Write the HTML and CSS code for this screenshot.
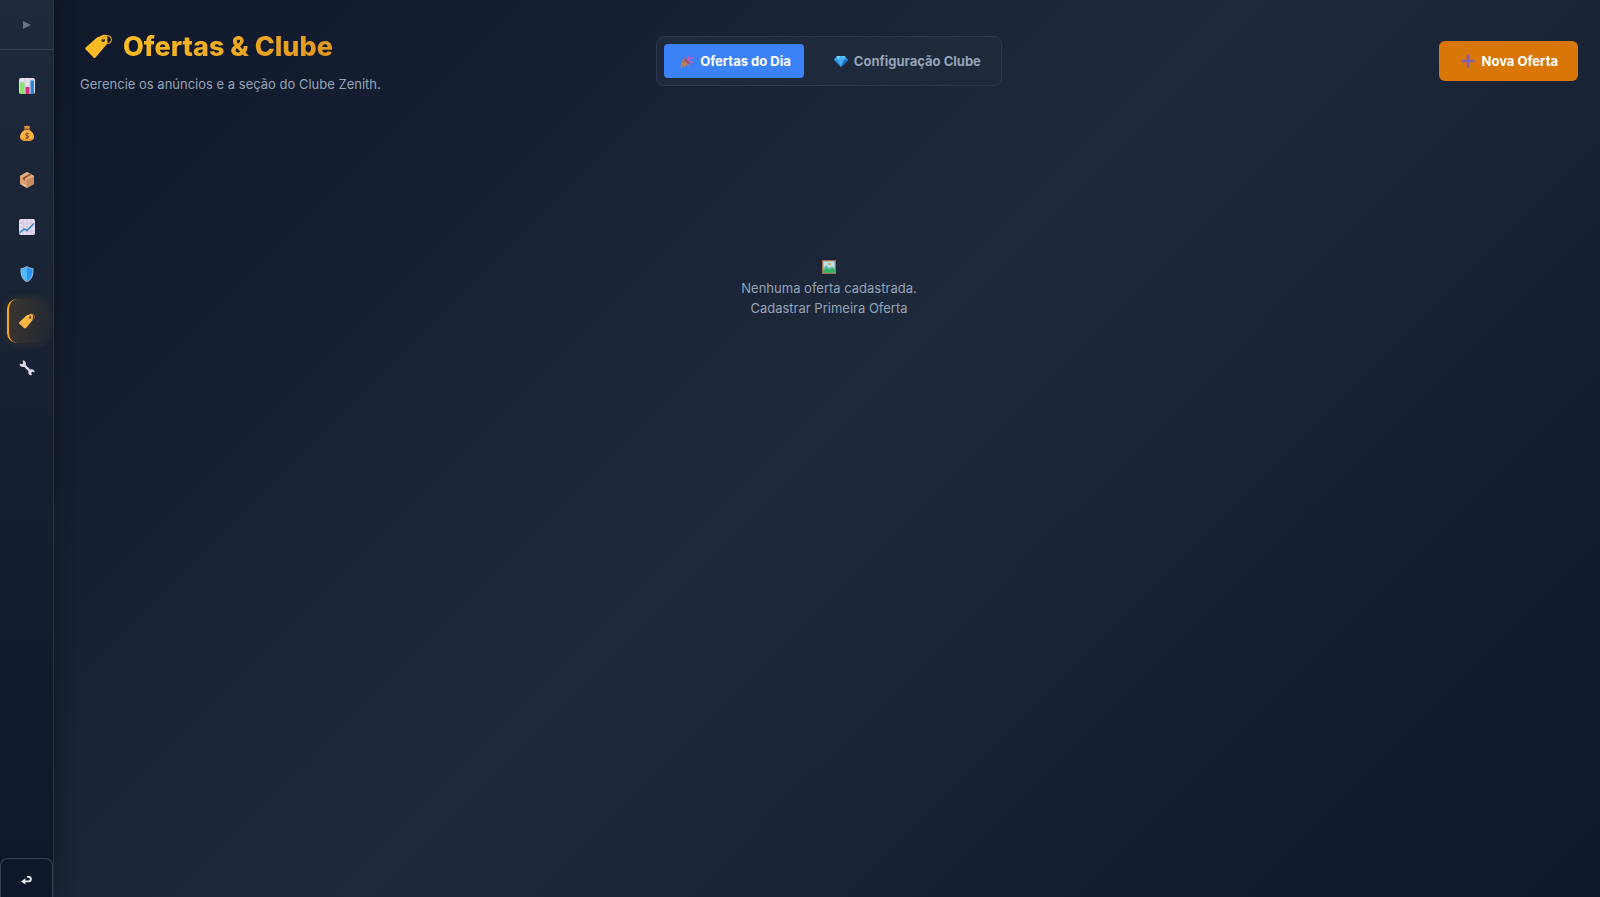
FILE: index.html
```html
<!DOCTYPE html>
<html lang="pt-BR">
<head>
    <meta charset="UTF-8">
    <meta name="viewport" content="width=device-width, initial-scale=1.0">
    <title>Ofertas &amp; Clube</title>
    <link rel="stylesheet" href="styles.css">
</head>
<body>
    <aside class="sidebar">
        <button type="button" class="sidebar-toggle" aria-label="Expandir menu">
            <svg class="icon-toggle" viewBox="0 0 8 8"><path d="M0 0L8 4L0 8Z" fill="#64748b"/></svg>
        </button>
        <nav class="sidebar-nav">
            <a href="#" class="nav-link" aria-label="Dashboard">
                <svg class="icon" viewBox="0 0 16 16">
                    <rect width="16" height="16" rx="2" fill="#e6e0ee"/>
                    <path d="M0 4H16M0 8H16M0 12H16M6 0V16M11 0V16" stroke="#c5bdd2" stroke-width=".5"/>
                    <rect x="1" y="4.500" width="4.500" height="11.500" fill="#8be070"/>
                    <rect x="6.500" y="9" width="4" height="7" fill="#d92d78"/>
                    <rect x="11.500" y="2.500" width="3.500" height="13.500" fill="#2b86d8"/>
                </svg>
            </a>
            <a href="#" class="nav-link" aria-label="Vendas">
                <svg class="icon" viewBox="0 0 16 16">
                    <path d="M5.500 5C2.500 7 1 9.500 1 11.500C1 14.500 3 16 8 16C13 16 15 14.500 15 11.500C15 9.500 13.500 7 10.500 5Z" fill="#f9b53f"/>
                    <path d="M1.200 12.500C1.700 15 4 16 8 16C12 16 14.300 15 14.800 12.500C12 14.500 5 14.800 1.200 12.500Z" fill="#e8953a"/>
                    <path d="M5 .8L7 1.300L8 .2L9.200 1.300L11 .8L10.200 4H5.800Z" fill="#e5953a"/>
                    <rect x="4.700" y="3.600" width="6.600" height="1.600" rx=".8" fill="#a05f32"/>
                    <path d="M9.800 9C9 8 6.500 8.200 6.500 9.600C6.500 11.100 9.800 10.400 9.800 12C9.800 13.300 7 13.500 6.200 12.500M8.100 7.500V14" fill="none" stroke="#81502b" stroke-width="1"/>
                </svg>
            </a>
            <a href="#" class="nav-link" aria-label="Produtos">
                <svg class="icon" viewBox="0 0 16 16">
                    <path d="M8 0L15 4V12L8 16L1 12V4Z" fill="#d59a68"/>
                    <path d="M1 4L8 7.500V16L1 12Z" fill="#d9a071"/>
                    <path d="M15 4L8 7.500V16L15 12Z" fill="#c98c60"/>
                    <path d="M1 4L8 0L15 4L8 7.500Z" fill="#e5b17e"/>
                    <path d="M4 5.500L11 1.700L12.500 2.600L6 6.500V8.500L4 7.500Z" fill="#875238"/>
                    <path d="M4 11.800L7 13.300V14.500L4 13Z" fill="#f1d9c7"/>
                </svg>
            </a>
            <a href="#" class="nav-link" aria-label="Relatórios">
                <svg class="icon" viewBox="0 0 16 16">
                    <rect width="16" height="16" rx="2" fill="#e6dcee"/>
                    <path d="M0 4H16M0 8H16M0 12H16M4 0V16M8 0V16M12 0V16" stroke="#c7bad6" stroke-width=".6"/>
                    <path d="M.5 14L5 10L8 11.500L15 4.500" fill="none" stroke="#2f86cf" stroke-width="1.500"/>
                </svg>
            </a>
            <a href="#" class="nav-link" aria-label="Segurança">
                <svg class="icon" viewBox="0 0 16 16">
                    <path d="M8 0C10 1.500 12 2 14.500 2.200C15 9 13 14 8 16C3 14 1 9 1.500 2.200C4 2 6 1.500 8 0Z" fill="#8ab9d4"/>
                    <path d="M8 1C6.500 2.200 4.500 2.800 2.500 3C2.300 8.500 4 13 8 15Z" fill="#50b8ff"/>
                    <path d="M8 1C9.500 2.200 11.500 2.800 13.500 3C13.700 8.500 12 13 8 15Z" fill="#2f93ee"/>
                </svg>
            </a>
            <a href="#" class="nav-link active" aria-label="Ofertas e Clube" aria-current="page">
                <svg class="icon" viewBox="0 0 16 16">
                    <path d="M.3 9.200L7.500 2.500L11.800 .8Q13.800 .5 14 2.500L13.700 7L7 15Q6 15.900 5 15L.4 10.800Q-.4 10 .3 9.200Z" fill="#ffb83f"/>
                    <circle cx="11.200" cy="4.500" r="1.300" fill="#6b4a2b"/>
                    <path d="M11.200 4.500C10 1.500 13.500 .5 15 2C16.500 4 15 6.500 13 6.500" fill="none" stroke="#a4743c" stroke-width=".9"/>
                </svg>
            </a>
            <a href="#" class="nav-link" aria-label="Configurações">
                <svg class="icon" viewBox="0 0 16 16">
                    <path d="M3.500 .5L4.200 3L3 4.200L.7 3.500C.3 6 2.500 7.700 5 6.700L9.600 11.200C8.700 13.700 10.500 15.800 13 15.300L12.200 13L13.300 11.800L15.600 12.500C15.900 10 13.600 8.500 11.200 9.400L6.700 4.900C7.500 2.500 6 .3 3.500 .5Z" fill="#ded7e8"/>
                </svg>
            </a>
        </nav>
        <button type="button" class="sidebar-exit" aria-label="Sair">
            <svg class="icon-exit" viewBox="0 0 12 10"><path d="M6.500 1.500H8.500C11.500 1.500 11.500 6.500 8.500 6.500H3" fill="none" stroke="#e8edf5" stroke-width="2"/><path d="M0 6.500L4.800 3V10Z" fill="#e8edf5"/></svg>
        </button>
    </aside>

    <main class="content">
        <header class="page-header">
            <div class="page-heading">
                <h1>
                    <svg class="icon-title" viewBox="0 0 28 26">
                        <path d="M.7 13.500L12 3.500L18.500 .8Q22 .2 22.400 3L22.400 9.500L10.500 23.500Q9.500 24.500 8.500 23.500L.7 15.500Q-.1 14.500 .7 13.500Z" fill="#fcbb24"/>
                        <circle cx="18.300" cy="6.300" r="1.700" fill="#111b2e"/>
                        <path d="M18.300 6.300C17 2 22.500 .5 25 2.500C28 5.500 25.500 10.500 21.500 9" fill="none" stroke="#d99e27" stroke-width="1.200"/>
                    </svg>
                    <span>Ofertas &amp; Clube</span>
                </h1>
                <p>Gerencie os anúncios e a seção do Clube Zenith.</p>
            </div>
            <div class="tabs">
                <button type="button" class="tab active">
                    <svg class="icon-small" viewBox="0 0 14 14">
                        <path d="M3.500 4L10 10.500L1 13.500Q.3 13.500 .5 12.500Z" fill="#c08a62"/>
                        <path d="M2.500 7L7 11.500M1.600 10L4 12.500" stroke="#8a6670" stroke-width="1"/>
                        <ellipse cx="6.800" cy="7.200" rx="1.500" ry="4.300" transform="rotate(-45 6.800 7.200)" fill="#a35670"/>
                        <path d="M7 6C9 5 9 3 7.500 1.500M8 7C10 4 11 4 13 3.500M9 8C11 7 12 8 13 9" fill="none" stroke="#c95cb4" stroke-width="1.100"/>
                        <path d="M3 1.500H4.500M10.500 1.500H12M11.500 6H13M10.500 12H12" stroke="#7a67e0" stroke-width="1.400"/>
                    </svg>
                    <span>Ofertas do Dia</span>
                </button>
                <button type="button" class="tab">
                    <svg class="icon-small" viewBox="0 0 14 14">
                        <path d="M3 2H11L14 6L7 13L0 6Z" fill="#2b91e5"/>
                        <path d="M3 2L0 6H4Z" fill="#3ba8ef"/>
                        <path d="M3 2H7L4 6Z" fill="#79d8fc"/>
                        <path d="M7 2L4 6H10Z" fill="#42b4f3"/>
                        <path d="M7 2H11L10 6Z" fill="#62c9fa"/>
                        <path d="M4 6H10L7 13Z" fill="#45adf2"/>
                        <path d="M10 6H14L7 13Z" fill="#1d72c8"/>
                    </svg>
                    <span>Configuração Clube</span>
                </button>
            </div>
            <button type="button" class="btn-new">
                <svg class="icon-small" viewBox="0 0 14 14"><path d="M7 .5V13.500M.5 7H13.500" stroke="#8060b8" stroke-width="2.400"/></svg>
                <span>Nova Oferta</span>
            </button>
        </header>

        <section class="empty-state">
            <svg class="icon-picture" viewBox="0 0 14 14">
                <rect width="14" height="14" fill="#a86c4a"/>
                <rect x="1.300" y="1.300" width="11.400" height="11.400" fill="#b4e2ed"/>
                <circle cx="7.500" cy="4" r="1.500" fill="#d9b568"/>
                <path d="M1.300 8L4.500 5.500L7 8L10 6.500L12.700 8.500V12.700H1.300Z" fill="#69b7a4"/>
                <path d="M1.300 10L5 8.500L8 10L10.500 8L12.700 9.500V12.700H1.300Z" fill="#2fb35c"/>
            </svg>
            <p>Nenhuma oferta cadastrada.</p>
            <p>Cadastrar Primeira Oferta</p>
        </section>
    </main>
</body>
</html>
```

FILE: styles.css
```css
* {
    margin: 0;
    padding: 0;
    box-sizing: border-box;
}
body {
    display: flex;
    min-height: 100vh;
    font-family: 'Inter', sans-serif;
    font-size: 13px;
    line-height: 20px;
    color: #94a3b8;
    background: linear-gradient(135deg, #0f172a 0%, #1e293b 50%, #0f172a 100%);
}
button {
    font-family: inherit;
    font-size: 13px;
    line-height: 20px;
    border: none;
    background: none;
    cursor: pointer;
}

/* Sidebar */
.sidebar {
    display: flex;
    flex-direction: column;
    flex-shrink: 0;
    width: 54px;
    border-right: 1px solid #233044;
    background: linear-gradient(180deg, #1e293b 0%, #0f172a 100%);
    box-shadow: 4px 0 20px rgba(0, 0, 0, 0.2);
}
.sidebar-toggle {
    display: flex;
    align-items: center;
    justify-content: center;
    height: 50px;
    border-bottom: 1px solid #334155;
}
.icon-toggle {
    width: 8px;
    height: 8px;
}
.sidebar-nav {
    display: flex;
    flex-direction: column;
    flex: 1;
    gap: 3px;
    padding: 14px 6px 14px 7px;
}
.nav-link {
    display: flex;
    justify-content: center;
    padding: 14px 2px 14px 0;
    border-left: 2px solid transparent;
    border-radius: 10px;
}
.nav-link.active {
    border-left-color: #f5a623;
    background: linear-gradient(90deg, rgba(245, 158, 11, 0.15), rgba(245, 158, 11, 0.05));
    box-shadow: 0 0 10px rgba(245, 158, 11, 0.15);
}
.icon {
    width: 16px;
    height: 16px;
}
.sidebar-exit {
    display: flex;
    align-items: center;
    justify-content: center;
    height: 39px;
    padding-top: 3px;
    border: 1px solid #334155;
    border-bottom: none;
    border-radius: 8px 8px 0 0;
    background: #0f172a;
}
.icon-exit {
    width: 11px;
    height: 10px;
}

/* Content */
.content {
    flex: 1;
    padding: 27px 22px 27px 26px;
}
.page-header {
    display: grid;
    grid-template-columns: 1fr auto 1fr;
    align-items: center;
}
.page-heading h1 {
    display: flex;
    align-items: center;
    gap: 10px;
    padding-left: 5px;
    font-size: 27px;
    line-height: 40px;
    font-weight: 800;
}
.page-heading h1 span {
    background: linear-gradient(135deg, #fbbf24, #e09520);
    -webkit-background-clip: text;
    background-clip: text;
    color: transparent;
}
.icon-title {
    width: 28px;
    height: 26px;
}
.page-heading p {
    margin-top: 7px;
}
.tabs {
    display: flex;
    gap: 14px;
    padding: 7px;
    border: 1px solid #2c394c;
    border-radius: 8px;
    background: #1e293b;
}
.tab {
    display: flex;
    align-items: center;
    gap: 6px;
    padding: 7px 13px 7px 16px;
    border-radius: 4px;
    font-weight: 700;
    color: #94a3b8;
}
.tab.active {
    background: #3b82f6;
    color: white;
}
.icon-small {
    width: 14px;
    height: 14px;
}
.btn-new {
    display: flex;
    align-items: center;
    justify-self: end;
    gap: 6px;
    padding: 10px 20px 10px 22px;
    border-radius: 6px;
    background: #d97706;
    font-weight: 700;
    color: white;
}
.empty-state {
    display: flex;
    flex-direction: column;
    align-items: center;
    padding-top: 166px;
    text-align: center;
}
.icon-picture {
    width: 14px;
    height: 14px;
    margin-bottom: 4px;
}
```
